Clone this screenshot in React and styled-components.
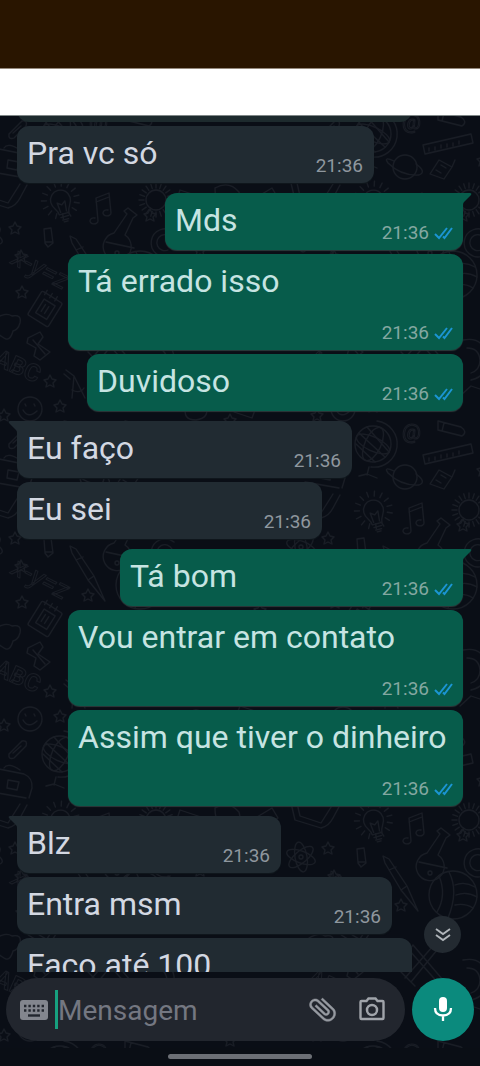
import React from 'react'
import styled, { createGlobalStyle } from 'styled-components'

const messages = [
    { text: 'Pra vc só', width: 357 },
    { text: 'Mds', width: 298, sent: true, first: true },
    { text: 'Tá errado isso', width: 395, sent: true, tall: true },
    { text: 'Duvidoso', width: 376, sent: true },
    { text: 'Eu faço', width: 335, first: true },
    { text: 'Eu sei', width: 305 },
    { text: 'Tá bom', width: 343, sent: true, first: true },
    { text: 'Vou entrar em contato', width: 395, sent: true, tall: true },
    { text: 'Assim que tiver o dinheiro', width: 395, sent: true, tall: true },
    { text: 'Blz', width: 264, first: true },
    { text: 'Entra msm', width: 375 },
    { text: 'Faço até 100', width: 395, tall: true },
]

const STAR = 'M0 -6 L2 -2 L6 -1 L3 2 L4 6 L0 4 L-4 6 L-3 2 L-6 -1 L-2 -2 Z'

const stars = [
    [15, 228], [21, 256], [22, 292], [88, 285], [50, 381], [60, 406], [4, 415], [200, 250], [150, 215],
    [230, 420], [170, 470], [260, 300],
]

function rays(from, to, count) {
    let d = ''
    for (let i = 0; i < count; i++) {
        const a = (i * 2 * Math.PI) / count
        d += `M${(Math.cos(a) * from).toFixed(1)} ${(Math.sin(a) * from).toFixed(1)}L${(Math.cos(a) * to).toFixed(1)} ${(Math.sin(a) * to).toFixed(1)}`
    }
    return d
}

const Doodles = () => (
    <Wallpaper aria-hidden="true">
        <defs>
            <pattern id="doodles" x="-28" y="64" width="313" height="310" patternUnits="userSpaceOnUse">
                <g transform="translate(28 -180)" fill="none" stroke="#191d25" strokeWidth="1.3" strokeLinejoin="round" strokeLinecap="round">
                    {stars.map(([x, y]) => (
                        <path key={x + '-' + y} d={STAR} transform={`translate(${x} ${y})`} />
                    ))}

                    {/* light bulb */}
                    <g transform="translate(61 202) rotate(-15)">
                        <path d="M-5 12 C-5 6 -10 5 -10 -2 A10 10 0 0 1 10 -2 C10 5 5 6 5 12 Z M-4 15 H4 M-3 18 H3 M-2 20 H2 M-3 10 L-4 0 L0 3 L4 0 L3 10" />
                        <path d={rays(14, 19, 15)} transform="translate(0 -2)" />
                    </g>

                    {/* music notes */}
                    <path d="M98 221 L96 198 L109 193 L111 213 M96 202 L109 197 M98 221 a4 3 0 1 1 -3 -3 M111 213 a4 3 0 1 1 -3 -3" />

                    {/* sun */}
                    <g transform="translate(156 200)">
                        <circle r="10" />
                        <path d={rays(12, 17, 20)} />
                    </g>

                    {/* bag */}
                    <path d="M-22 183 L-18 200 L8 208 Q16 206 20 198 L27 185 M-16 183 L-13 196 L8 203 L20 184" />

                    {/* atom */}
                    <g transform="translate(-12 237)">
                        <ellipse rx="15" ry="6" transform="rotate(20)" />
                        <ellipse rx="15" ry="6" transform="rotate(80)" />
                        <ellipse rx="15" ry="6" transform="rotate(140)" />
                        <circle r="2" />
                    </g>

                    {/* marker, pen */}
                    <path d="M44 229 L51 228 L53 243 L48 247 L45 243 Z M45 242 H52" />
                    <path d="M70 236 L76 239 L94 266 L105 291 L88 270 L72 243 Z M88 270 L94 266 M76 250 L83 247" />

                    {/* flask */}
                    <path d="M114 233 L127 214 L124 211 L128 208 L137 215 L133 218 L125 235 A14 14 0 1 1 114 233 M106 242 L134 248" />
                    <circle cx="117" cy="253" r="2" />

                    {/* horn and volleyball */}
                    <path d="M174 232 A14 14 0 1 0 170 256 M172 239 A8 8 0 1 0 168 250 M168 256 L174 260" />
                    <g transform="translate(140 275)">
                        <circle r="24" />
                        <path d="M-14 -19 Q-6 0 -16 17 M-4 -23 Q6 -4 -5 23 M2 -10 Q12 -14 22 -8 M3 0 Q14 -4 24 2 M2 10 Q12 8 20 13" />
                    </g>

                    <text transform="translate(10 263) rotate(27)" fontFamily="Roboto, sans-serif" fontSize="27" fontStyle="italic" strokeWidth="1">x-y=z</text>

                    {/* notebook */}
                    <g transform="translate(45 309) rotate(32)">
                        <rect x="-12" y="-14" width="24" height="28" rx="2" />
                        <rect x="-6" y="-8" width="13" height="16" />
                        <path d="M-2 -4 V4 M2 -4 V4 M-8 -17 V-12 M-2 -17 V-12 M4 -17 V-12" />
                    </g>

                    <path d="M-4 318 Q6 312 12 316 Q22 314 20 323 Q18 330 13 331 Q10 342 4 338 Q-4 334 -6 326 Z" />

                    {/* hourglass */}
                    <path d="M28 338 L40 332 L43 337 L38 344 L50 352 L40 360 L34 356 L36 348 L27 343 Z M33 340 L45 354" />

                    <text transform="translate(-7 364) rotate(24)" fontFamily="Roboto, sans-serif" fontSize="24" fontWeight="700" strokeWidth="1">ABC</text>

                    {/* compasses */}
                    <path d="M66 370 L74 376 L85 398 M74 376 L72 398 M72 390 Q80 394 84 388 M64 374 L70 379" />

                    {/* smiley */}
                    <circle cx="30" cy="409" r="12" />
                    <path d="M23 410 Q28 419 37 411 M25 404 l1 2 M34 404 l1 2" />

                    {/* crossed tools */}
                    <path d="M100 325 L130 360 L126 364 L96 330 Z M120 326 L92 358 M124 330 L98 362 M88 352 L102 366" />

                    {/* shell */}
                    <path d="M150 340 Q170 336 174 356 Q176 376 158 380 M154 348 Q166 348 167 360 Q167 370 158 373 M147 396 L158 386 L176 392" />

                    {/* paper clip */}
                    <path d="M9 444 L22 431 Q28 430 26 436 L14 448 Q8 450 9 444 M13 443 L21 436" />

                    {/* globe */}
                    <g transform="translate(60 444)">
                        <circle r="18" />
                        <ellipse rx="8" ry="18" transform="rotate(25)" />
                        <ellipse rx="18" ry="7" transform="rotate(25)" />
                        <path d="M-14 -11 L12 13 M-6 -17 L16 8 M-17 0 L2 18 M4 -23 A23 23 0 0 1 -2 23 M-4 23 L-6 31 M-14 32 L-6 30 L4 34" />
                    </g>

                    {/* school bag */}
                    <path d="M-6 458 L24 464 Q33 468 32 478 L29 488 M-8 482 L26 488 M8 470 L19 472 L17 480 L7 478 Z M4 458 Q8 452 20 460" />

                    <text x="89" y="439" fontFamily="Roboto, sans-serif" fontSize="21" strokeWidth="1">@</text>

                    {/* eraser, ruler */}
                    <path d="M125 421 L148 427 Q155 432 149 436 L125 430 Z M131 423 L129 431" />
                    <path d="M110 455 L158 444 L160 453 L112 464 Z M116 458 v3 M122 457 v3 M128 455 v3 M134 454 v3 M140 453 v3 M146 451 v3" />

                    {/* planet */}
                    <circle cx="92" cy="477" r="12" />
                    <path d="M81 471 Q70 466 75 473 Q88 486 106 485 Q114 482 103 474" />

                    {/* radio */}
                    <path d="M126 470 L139 477 L131 489 L117 484 Z M128 475 L133 478 M123 480 L128 483 M139 477 L142 470" />

                    {/* shapes between the message columns */}
                    <path d="M180 190 l24 8 l-4 12 l-24 -8 Z M215 188 q14 -8 24 4 q4 14 -10 16 q-14 0 -14 -20 M252 200 l20 -12 l6 10 l-20 12 Z" />
                    <path d="M186 406 q10 -12 20 0 q4 12 -10 14 q-14 0 -10 -14 M240 396 l18 6 l-6 16 l-18 -6 Z" />
                </g>
            </pattern>
        </defs>
        <rect width="100%" height="100%" fill="url(#doodles)" />
    </Wallpaper>
)

const Message = ({ text, width, sent, tall, first }) => (
    <Bubble $width={width} $sent={sent} $tall={tall} $first={first}>
        {first && (
            <Tail $sent={sent} viewBox="0 0 10 12">
                <path d={sent ? 'M0 0 H8 Q10 0 9 2 L2 9 Q1 10 1 12 H0 Z' : 'M10 0 H2 Q0 0 1 2 L8 9 Q9 10 9 12 H10 Z'} />
            </Tail>
        )}
        <Text $sent={sent}>{text}</Text>
        <Meta $sent={sent}>
            21:36
            {sent && (
                <Ticks viewBox="0 0 19 14">
                    <path d="M1 8 L5 12 L13 2 M9 10.500 L10.500 12 L18 2" />
                </Ticks>
            )}
        </Meta>
    </Bubble>
)

const App = () => {
    return (
        <Container>
            <GlobalStyle />

            <Header />
            <TitleBar />

            <Chat>
                <Doodles />

                <Messages>
                    <Previous />
                    {messages.map((m) => (
                        <Message key={m.text} {...m} />
                    ))}
                </Messages>

                <ScrollDown aria-label="Ir para o fim">
                    <svg width="18" height="16" viewBox="0 0 18 16">
                        <path d="M2 2 L9 7 L16 2 M2 8 L9 13 L16 8" fill="none" stroke="#b0b5ba" strokeWidth="1.9" />
                    </svg>
                </ScrollDown>

                <Composer>
                    <InputWrapper>
                        <IconButton aria-label="Teclado">
                            <svg width="28" height="20" viewBox="0 0 28 20">
                                <rect width="28" height="20" rx="3" fill="#83868e" />
                                <path d="M4 6 H24 M4 10.500 H24" stroke="#22262e" strokeWidth="2.400" strokeDasharray="2.400 2" />
                                <path d="M8 15.500 H20" stroke="#22262e" strokeWidth="2.400" />
                            </svg>
                        </IconButton>
                        <Caret />
                        <Input type="text" placeholder="Mensagem" aria-label="Mensagem" />
                        <IconButton aria-label="Anexar">
                            <svg width="28" height="28" viewBox="0 0 28 28">
                                <path
                                    transform="translate(14 13) rotate(-47) scale(1.400 1.300) translate(-12.500 -12)"
                                    fill="#969aa1"
                                    stroke="#969aa1"
                                    strokeWidth="0.3"
                                    d="M16.500 6v11.500c0 2.210-1.790 4-4 4s-4-1.790-4-4V5c0-1.380 1.120-2.500 2.500-2.500s2.500 1.120 2.500 2.500v10.500c0 .55-.45 1-1 1s-1-.45-1-1V6H10v9.500c0 1.380 1.120 2.500 2.500 2.500s2.500-1.120 2.500-2.500V5c0-2.210-1.790-4-4-4S7 2.790 7 5v12.500c0 3.040 2.460 5.500 5.500 5.500s5.500-2.460 5.500-5.500V6h-1.500z"
                                />
                            </svg>
                        </IconButton>
                        <IconButton aria-label="Câmera">
                            <svg width="26" height="26" viewBox="0 0 26 26" fill="none" stroke="#a0a4aa">
                                <path d="M2.500 4 H7.500 L9.500 1.500 H16.500 L18.500 4 H23.500 Q24.500 4 24.500 5 V21 Q24.500 22 23.500 22 H2.500 Q1.500 22 1.500 21 V5 Q1.500 4 2.500 4 Z" strokeWidth="2.400" />
                                <circle cx="13" cy="13" r="5" strokeWidth="2.500" />
                            </svg>
                        </IconButton>
                    </InputWrapper>
                    <MicButton aria-label="Gravar áudio">
                        <svg width="20" height="26" viewBox="0 0 20 26">
                            <rect x="6" y="0" width="8" height="15" rx="4" fill="#ffffff" />
                            <path d="M2 11 Q2 18.500 10 18.500 Q18 18.500 18 11 M10 18.500 V24" fill="none" stroke="#ffffff" strokeWidth="2.300" />
                        </svg>
                    </MicButton>
                </Composer>
            </Chat>

            <Navigation>
                <Handle />
            </Navigation>
        </Container>
    )
}

const GlobalStyle = createGlobalStyle`
    body {
        margin: 0;
        background: #0a0e15;
    }

    * {
        box-sizing: border-box;
    }
`

const Container = styled.div`
    width: 100%;
    height: 100vh;
    display: flex;
    flex-direction: column;
    overflow: hidden;
    font-family: Roboto, sans-serif;
    background: #0a0e15;
`

const Header = styled.header`
    flex: 0 0 69px;
    background: #291500;
    border-bottom: 1px solid #94897c;
`

const TitleBar = styled.div`
    flex: 0 0 47px;
    background: #ffffff;
    border-bottom: 1px solid #7f8787;
`

const Chat = styled.main`
    position: relative;
    flex: 1;
    min-height: 0;
    display: flex;
    flex-direction: column;
    overflow: hidden;
    background: #0a0e16;
`

const Wallpaper = styled.svg`
    position: absolute;
    top: 0;
    left: 0;
    width: 100%;
    height: 100%;
`

const Messages = styled.section`
    position: relative;
    flex: 1;
    min-height: 0;
    display: flex;
    flex-direction: column;
    padding: 0 17px;
    overflow: hidden;
`

/* lower edge of the message that is scrolled out */
const Previous = styled.div`
    flex: none;
    width: 395px;
    max-width: 100%;
    height: 24px;
    margin-top: -18px;
    border-radius: 12px;
    background: #1d2a2d;
`

const Bubble = styled.div`
    position: relative;
    flex: none;
    display: flex;
    flex-direction: ${(p) => (p.$tall ? 'column' : 'row')};
    justify-content: space-between;
    width: ${(p) => p.$width}px;
    max-width: 100%;
    height: ${(p) => (p.$tall ? 96 : 57)}px;
    margin-top: ${(p) => (p.$first ? 10 : 4)}px;
    padding: 7px ${(p) => (p.$sent ? 10 : 11)}px 7px 10px;
    align-self: ${(p) => (p.$sent ? 'flex-end' : 'flex-start')};
    border-radius: 12px;
    border-top-left-radius: ${(p) => (p.$first && !p.$sent ? 0 : 12)}px;
    border-top-right-radius: ${(p) => (p.$first && p.$sent ? 0 : 12)}px;
    background: ${(p) => (p.$sent ? '#075c4b' : '#212b32')};
    box-shadow: 0 1px 1px ${(p) => (p.$sent ? '#2c3a3b' : '#10181d')};
`

const Tail = styled.svg`
    position: absolute;
    top: 0;
    ${(p) => (p.$sent ? 'right: -9px;' : 'left: -9px;')}
    width: 10px;
    height: 12px;
    fill: ${(p) => (p.$sent ? '#075c4b' : '#212b32')};
`

const Text = styled.span`
    font-size: 32px;
    line-height: 40px;
    white-space: nowrap;
    color: ${(p) => (p.$sent ? '#c6e4e2' : '#d3d8e2')};
`

const Meta = styled.span`
    display: flex;
    align-items: center;
    align-self: flex-end;
    gap: 5px;
    font-size: 19px;
    line-height: 20px;
    color: ${(p) => (p.$sent ? '#84a8a1' : '#8f979e')};
`

const Ticks = styled.svg`
    width: 19px;
    height: 14px;
    fill: none;
    stroke: #1b95d3;
    stroke-width: 2;
`

const ScrollDown = styled.button`
    position: absolute;
    right: 19px;
    bottom: 95px;
    width: 37px;
    height: 37px;
    display: flex;
    align-items: center;
    justify-content: center;
    padding: 0;
    border: 0;
    border-radius: 50%;
    background: #232a31;
`

const Composer = styled.div`
    position: relative;
    flex: none;
    display: flex;
    gap: 7px;
    padding: 6px 6px 7px 6px;
`

const InputWrapper = styled.div`
    flex: 1;
    min-width: 0;
    height: 63px;
    display: flex;
    align-items: center;
    padding: 0 20px 0 14px;
    border-radius: 32px;
    background: #22262e;
`

const IconButton = styled.button`
    flex: none;
    display: flex;
    padding: 0;
    border: 0;
    background: none;

    & + & {
        margin-left: 22px;
    }
`

const Caret = styled.span`
    flex: none;
    width: 3px;
    height: 39px;
    margin-left: 7px;
    background: #17a07f;
`

const Input = styled.input`
    flex: 1;
    min-width: 0;
    height: 40px;
    padding: 2px 0 0 0;
    border: 0;
    outline: none;
    background: none;
    font-family: Roboto, sans-serif;
    font-size: 28px;
    color: #d3d8e2;

    &::placeholder {
        color: #747781;
        opacity: 1;
    }
`

const MicButton = styled.button`
    flex: none;
    width: 62px;
    height: 63px;
    display: flex;
    align-items: center;
    justify-content: center;
    padding: 0;
    border: 0;
    border-radius: 50%;
    background: #0b8a7d;
`

const Navigation = styled.nav`
    flex: 0 0 18px;
    display: flex;
    justify-content: center;
    align-items: flex-start;
    padding-top: 6px;
`

const Handle = styled.div`
    width: 30%;
    height: 5px;
    border-radius: 3px;
    background: #6c6f75;
`

export default App
